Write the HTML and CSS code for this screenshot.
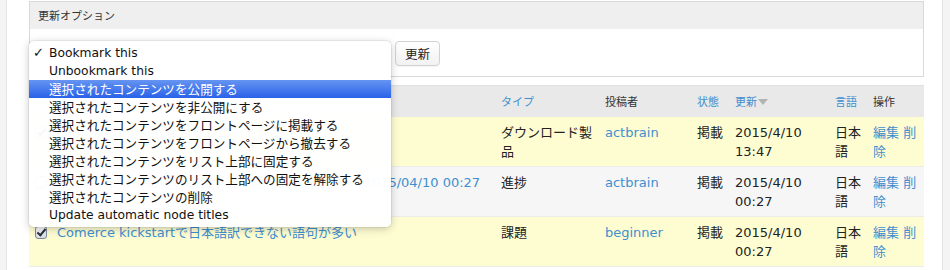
FILE: index.html
```html
<!DOCTYPE html>
<html lang="ja">
<head>
<meta charset="utf-8">
<link rel="stylesheet" href="styles.css">
</head>
<body>
<div class="page">
  <div class="opts">
    <div class="legend">更新オプション</div>
    <div class="opts-body">
      <div class="select-wrap">
        <div class="select"></div>
        <ul class="menu">
          <li class="en"><span class="tick">✓</span>Bookmark this</li>
          <li class="en">Unbookmark this</li>
          <li class="ja active">選択されたコンテンツを公開する</li>
          <li class="ja">選択されたコンテンツを非公開にする</li>
          <li class="ja">選択されたコンテンツをフロントページに掲載する</li>
          <li class="ja">選択されたコンテンツをフロントページから撤去する</li>
          <li class="ja">選択されたコンテンツをリスト上部に固定する</li>
          <li class="ja">選択されたコンテンツのリスト上部への固定を解除する</li>
          <li class="ja">選択されたコンテンツの削除</li>
          <li class="en">Update automatic node titles</li>
        </ul>
      </div>
      <button class="btn">更新</button>
    </div>
  </div>

  <table class="content">
    <colgroup>
      <col class="c-chk"><col class="c-title"><col class="c-type"><col class="c-author"><col class="c-status"><col class="c-updated"><col class="c-lang"><col class="c-ops">
    </colgroup>
    <thead>
      <tr>
        <th></th>
        <th class="link">タイトル</th>
        <th class="link">タイプ</th>
        <th>投稿者</th>
        <th class="link">状態</th>
        <th class="link">更新<span class="sort"></span></th>
        <th class="link">言語</th>
        <th>操作</th>
      </tr>
    </thead>
    <tbody>
      <tr class="sel">
        <td class="chk"><span class="cb on"></span></td>
        <td><a>Drupal Commerce ダウンロード製品</a></td>
        <td>ダウンロード製品</td>
        <td><a>actbrain</a></td>
        <td>掲載</td>
        <td>2015/4/10 13:47</td>
        <td>日本語</td>
        <td><a>編集</a> <a>削除</a></td>
      </tr>
      <tr class="odd">
        <td class="chk"><span class="cb"></span></td>
        <td><a>アクトブレインの進捗報告（日本語化翻訳作業中）&nbsp; 2015/04/10 00:27</a></td>
        <td>進捗</td>
        <td><a>actbrain</a></td>
        <td>掲載</td>
        <td>2015/4/10 00:27</td>
        <td>日本語</td>
        <td><a>編集</a> <a>削除</a></td>
      </tr>
      <tr class="sel">
        <td class="chk"><span class="cb on"></span></td>
        <td><a>Comerce kickstartで日本語訳できない語句が多い</a></td>
        <td>課題</td>
        <td><a>beginner</a></td>
        <td>掲載</td>
        <td>2015/4/10 00:27</td>
        <td>日本語</td>
        <td><a>編集</a> <a>削除</a></td>
      </tr>
    </tbody>
  </table>
</div>
</body>
</html>
```

FILE: styles.css
```css
html, body {
  margin: 0;
  padding: 0;
}
body {
  background: #f4f4f4;
  font-family: "DejaVu Sans", "Noto Sans CJK JP", sans-serif;
  color: #222;
  width: 950px;
  height: 270px;
  overflow: hidden;
}
.page {
  margin-left: 6px;
  width: 904px;
  height: 270px;
  background: #fff;
  border-left: 1px solid #e3e3e3;
  border-right: 1px solid #e3e3e3;
  padding: 1px 9px 0 22px;
}
.opts {
  border: 1px solid #d9d9d9;
  background: #fff;
  width: 893px;
}
.legend {
  height: 27px;
  line-height: 26px;
  background: #efefef;
  padding-left: 8px;
  font-family: "Noto Sans CJK JP", sans-serif;
  font-size: 11px;
  color: #333;
}
.opts-body {
  display: flex;
  align-items: flex-start;
  gap: 5px;
  padding: 12px 0 10px 0;
}
.select-wrap {
  position: relative;
  width: 360px;
  height: 25px;
}
.select {
  height: 23px;
  border: 1px solid #ccc;
  border-radius: 4px;
  background: #fff;
}
.menu {
  position: absolute;
  top: 0;
  left: -1px;
  width: 362px;
  margin: 0;
  padding: 3px 0 3px;
  list-style: none;
  background: rgba(255, 255, 255, 0.97);
  border-radius: 5px;
  box-shadow: 0 2px 8px rgba(0, 0, 0, 0.22), 0 0 0 1px rgba(0, 0, 0, 0.05);
  z-index: 2;
}
.menu li {
  position: relative;
  height: 18px;
  line-height: 18px;
  padding-left: 20px;
  color: #111;
  white-space: nowrap;
}
.menu li.en {
  font-family: "DejaVu Sans", sans-serif;
  font-size: 12.3px;
}
.menu li.ja {
  font-family: "Noto Sans CJK JP", sans-serif;
  font-size: 12.6px;
}
.menu li.active {
  color: #fff;
  background: linear-gradient(#6594f1, #2a62e9);
}
.tick {
  position: absolute;
  left: 4px;
  top: 0;
  font-size: 13px;
  font-weight: bold;
}
.btn {
  height: 25px;
  padding: 0 9px;
  border: 1px solid #d2d2d2;
  border-radius: 4px;
  background: linear-gradient(#ffffff, #f2f2f2);
  font-family: "Noto Sans CJK JP", sans-serif;
  font-size: 12.5px;
  color: #222;
  line-height: 22px;
  box-shadow: 0 1px 1px rgba(0, 0, 0, 0.04);
}
.content {
  margin-top: 8px;
  width: 895px;
  border-collapse: collapse;
  table-layout: fixed;
}
.c-chk { width: 22px; }
.c-title { width: 444px; }
.c-type { width: 104px; }
.c-author { width: 92px; }
.c-status { width: 38px; }
.c-updated { width: 100px; }
.c-lang { width: 38px; }
.c-ops { width: 57px; }
th {
  background: #e9e9e9;
  text-align: left;
  font-weight: normal;
  font-family: "Noto Sans CJK JP", sans-serif;
  font-size: 11px;
  line-height: 19px;
  color: #333;
  padding: 6px 4px 6px 6px;
  border-top: 1px solid #e0e0e0;
  height: 18px;
}
th.link {
  color: #3f8fcf;
}
.sort {
  display: inline-block;
  width: 0;
  height: 0;
  margin-left: 1px;
  border-left: 5px solid transparent;
  border-right: 5px solid transparent;
  border-top: 6px solid #b3b3b3;
  vertical-align: 1px;
}
td {
  font-size: 13px;
  line-height: 19px;
  padding: 6px 4px 5px 6px;
  vertical-align: top;
  border-bottom: 1px solid #ececec;
  color: #222;
}
td a {
  color: #3f8fcf;
}
tr.sel td {
  background: #fefdd2;
}
tr.odd td {
  background: #f6f6f6;
}
td.chk {
  padding: 9px 0 0 6px;
}
.cb {
  display: block;
  width: 10px;
  height: 11px;
  border: 1px solid #7f8a99;
  border-radius: 3px;
  background: linear-gradient(#fdfdfd, #d6dbe3);
  position: relative;
}
.cb.on::after {
  content: "";
  position: absolute;
  left: 3px;
  top: 0px;
  width: 3px;
  height: 7px;
  border-right: 2px solid #2a2f38;
  border-bottom: 2px solid #2a2f38;
  transform: rotate(40deg);
}
```
